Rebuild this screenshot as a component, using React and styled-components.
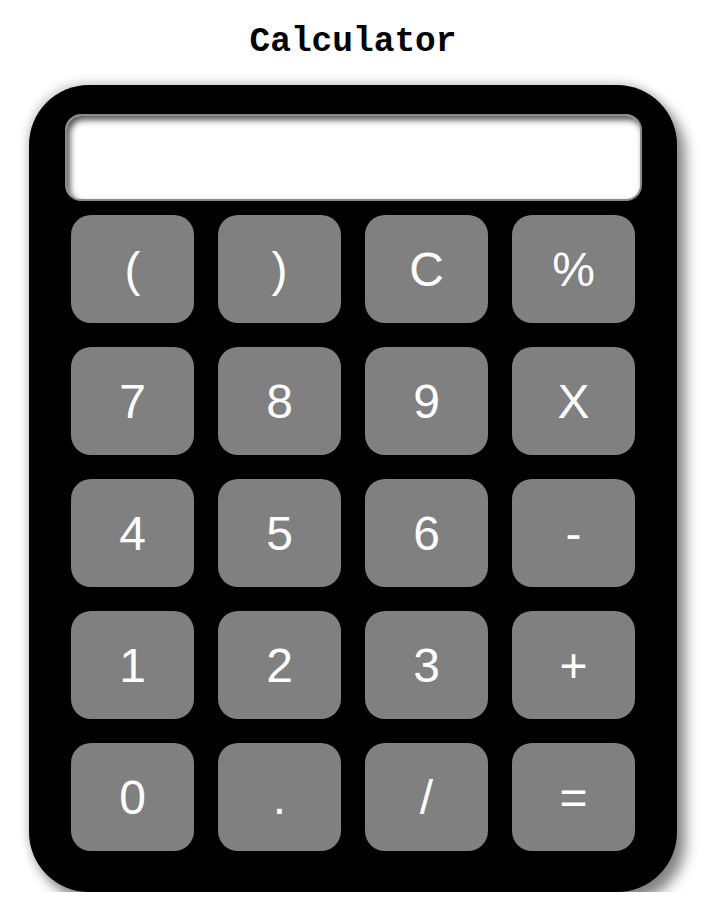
import React from 'react'
import styled, { createGlobalStyle } from 'styled-components'

const keys = [
  '(', ')', 'C', '%',
  '7', '8', '9', 'X',
  '4', '5', '6', '-',
  '1', '2', '3', '+',
  '0', '.', '/', '=',
]

const App = () => {
  return (
    <React.Fragment>
      <GlobalStyle />
      <Page>
        <Title>Calculator</Title>
        <Body>
          <Display readOnly value={''} />
          <Keypad>
            {keys.map((k) => (
              <Key key={k}>{k}</Key>
            ))}
          </Keypad>
        </Body>
      </Page>
    </React.Fragment>
  )
}

export default App

const GlobalStyle = createGlobalStyle`
  body {
    margin: 0;
    background: #ffffff;
  }
`

const Page = styled.div`
  display: flex;
  flex-direction: column;
  align-items: center;
  padding-top: 20px;
  padding-left: 3px;
`

const Title = styled.h1`
  margin: 0 0 21px 0;
  font-family: 'Liberation Mono', 'Courier New', monospace;
  font-weight: 700;
  font-size: 34.5px;
  line-height: 44px;
  color: #000;
`

const Body = styled.div`
  width: 648px;
  box-sizing: border-box;
  padding: 29px 35px 41px 36px;
  background: #000;
  border-radius: 60px;
  box-shadow: 8px 10px 14px #808080, -2px -3px 10px #d0d0d0;
  display: flex;
  flex-direction: column;
  gap: 14px;
`

const Display = styled.input`
  height: 87px;
  width: 100%;
  box-sizing: border-box;
  border: 2px solid #8a8a8a;
  border-radius: 16px;
  background: #fff;
  box-shadow: inset 3px 4px 6px #555;
  outline: none;
  font-family: 'Liberation Sans', Arial, sans-serif;
  font-size: 40px;
  text-align: right;
  padding: 0 16px;
`

const Keypad = styled.div`
  display: grid;
  grid-template-columns: repeat(4, 123px);
  grid-auto-rows: 108px;
  column-gap: 24px;
  row-gap: 24px;
  padding-left: 6px;
`

const Key = styled.button`
  border: none;
  border-radius: 20px;
  background: #808080;
  color: #fff;
  font-family: 'Liberation Sans', Arial, sans-serif;
  font-size: 48px;
  display: flex;
  align-items: center;
  justify-content: center;
  padding: 0;
  cursor: pointer;
`
